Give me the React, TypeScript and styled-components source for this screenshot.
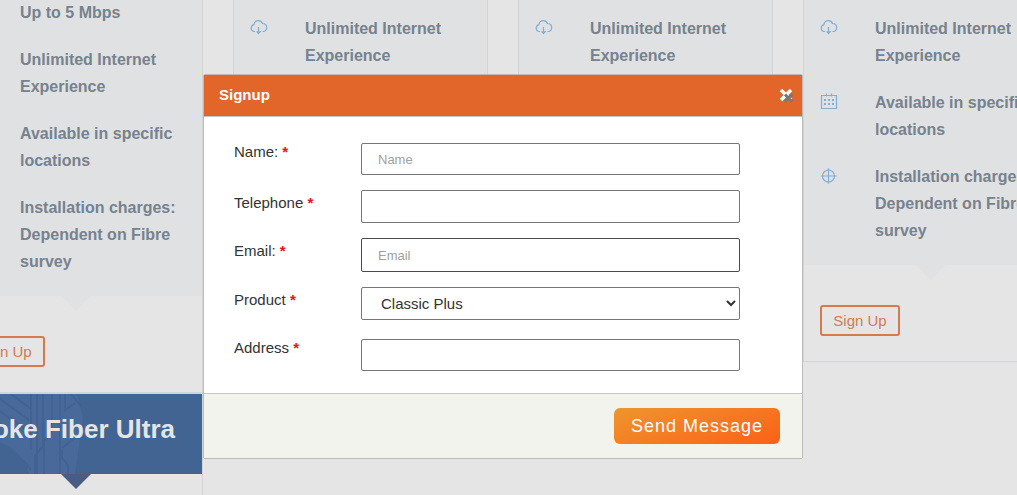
import React from "react";
import styled, { createGlobalStyle, css } from "styled-components";

const GlobalStyle = createGlobalStyle`
  *, *::before, *::after { box-sizing: border-box; }
  body {
    margin: 0;
    background: #e5e5e5;
    font-family: "Liberation Sans", Arial, sans-serif;
    font-size: 15px;
    color: #333;
  }
`;

const Page = styled.main`
  height: 100vh;
  overflow: hidden;
`;

const Plans = styled.section`
  display: grid;
  grid-template-columns: repeat(4, minmax(0, 1fr));
  align-items: start;
  gap: 30px;
  margin: 0 -41px 0 -52px;
`;

const Column = styled.div<{ $raised?: boolean }>`
  display: flex;
  flex-direction: column;
  margin-top: ${(p) => (p.$raised ? "-16px" : "0")};
`;

const Card = styled.article<{ $stacked?: boolean }>`
  border: 1px solid #d2d4d6;
  border-top-width: ${(p) => (p.$stacked ? "1px" : "0")};
`;

const pointer = css`
  &::after {
    content: "";
    position: absolute;
    top: 100%;
    left: 50%;
    margin-left: -15px;
    border: 15px solid transparent;
    border-bottom-width: 0;
  }
`;

const Features = styled.ul`
  position: relative;
  display: flex;
  flex-direction: column;
  gap: 20px;
  margin: 0;
  padding: 15px 16px 21px;
  list-style: none;
  background: #e0e1e3;
  ${pointer}
  &::after { border-top-color: #e0e1e3; }
`;

const Feature = styled.li`
  display: grid;
  grid-template-columns: 55px 1fr;
  font-size: 16px;
  font-weight: bold;
  line-height: 27px;
  color: #76828e;

  svg {
    width: 18px;
    height: 18px;
    margin-top: 3px;
    fill: none;
    stroke: #82aed6;
    stroke-width: 1.2;
  }
`;

const CardAction = styled.div`
  padding: 40px 16px 25px;
`;

const SignUpButton = styled.button`
  width: 80px;
  height: 31px;
  padding: 0;
  border: 2px solid #d67a4c;
  border-radius: 3px;
  background: transparent;
  color: #d67a4c;
  font: 15px "Liberation Sans", Arial, sans-serif;
`;

const PlanTitle = styled.header`
  position: relative;
  display: flex;
  align-items: center;
  justify-content: flex-end;
  height: 80px;
  padding: 0 27px 10px 0;
  background: #426492;
  ${pointer}
  &::after { border-top-color: #4b5c84; }

  h2 {
    position: relative;
    margin: 0;
    font-size: 26px;
    line-height: 30px;
    white-space: nowrap;
    color: #e5e5e5;
  }
`;

const Circuit = styled.svg`
  position: absolute;
  top: 0;
  left: 0;
  width: 140px;
  height: 80px;
`;

const PlanBody = styled.div`
  height: 240px;
`;

const Overlay = styled.div`
  position: fixed;
  inset: 0;
  display: flex;
  align-items: flex-start;
  justify-content: center;
  padding: 74px 11px 0 0;
`;

const Dialog = styled.form`
  width: 600px;
  max-width: 100%;
  border: 1px solid #bbb;
  border-radius: 2px;
  background: #fff;
`;

const DialogHeader = styled.header`
  display: flex;
  align-items: flex-start;
  justify-content: space-between;
  height: 42px;
  padding: 10px 8px 0 15px;
  border-bottom: 1px solid #c3c5c7;
  background: #e26529;

  h1 {
    margin: 0;
    font-size: 15px;
    line-height: 20px;
    color: #fff;
  }
`;

const CloseButton = styled.button`
  display: flex;
  align-items: center;
  height: 20px;
  padding: 0;
  border: 0;
  background: none;
`;

const Fields = styled.div`
  display: flex;
  flex-direction: column;
  gap: 15px;
  padding: 22px 62px 22px 30px;
`;

const Row = styled.div`
  display: grid;
  grid-template-columns: 127px 1fr;
  align-items: start;
`;

const Label = styled.label`
  padding-top: 3px;
  line-height: 20px;
`;

const Star = styled.b`
  color: #f01010;
`;

const control = css`
  width: 100%;
  border: 1px solid #767676;
  border-radius: 2px;
  background: #fff;
  color: #333;
  font-family: "Liberation Sans", Arial, sans-serif;
`;

const sizes = {
  compact: css`height: 32px; margin-top: 4px;`,
  regular: css`height: 33px;`,
  tall: css`height: 34px; border-color: #4a4a4a;`,
};

const Input = styled.input<{ $size: keyof typeof sizes }>`
  ${control}
  padding: 0 16px;
  font-size: 13px;
  ${(p) => sizes[p.$size]}
  &::placeholder { color: #a0a0a0; }
`;

const Select = styled.select`
  ${control}
  height: 33px;
  padding: 0 0 0 15px;
  font-size: 15px;
`;

const DialogFooter = styled.footer`
  display: flex;
  justify-content: flex-end;
  padding: 14px 22px;
  border-top: 1px solid #c5c7c5;
  background: #f2f3ec;
`;

const SendButton = styled.button`
  height: 36px;
  padding: 0 17px;
  border: 0;
  border-radius: 6px;
  background: linear-gradient(160deg, #ee962d, #fc6018);
  color: #fff;
  font: 18px "Liberation Sans", Arial, sans-serif;
  letter-spacing: 1px;
`;

const CloudIcon = () => (
  <svg viewBox="0 0 18 18" aria-hidden="true">
    <path d="M5 13.500H3.800C2.200 13.200 1.200 11.800 1.200 10.100c0-1.800 1.100-3 2.700-3.500C4.300 4.200 6 2.600 8.300 2.600c2 0 3.500 1.100 4.200 2.900 2.600.1 4.200 1.800 4.200 4.100 0 2.100-1.200 3.600-3.100 3.900H12.500M6.500 13.500h1M10 13.500h1M8.500 9v6M6.800 13.500l1.700 2 1.700-2" />
  </svg>
);

const CalendarIcon = () => (
  <svg viewBox="0 0 18 18" aria-hidden="true">
    <path d="M1.500 3.500h15v13h-15zM6.500 1.500v3M11.500 1.500v3" />
    <path d="M4 8h2M8 8h2M12 8h2M4 12h2M8 12h2M12 12h2" strokeWidth="2" />
  </svg>
);

const TargetIcon = () => (
  <svg viewBox="0 0 18 18" aria-hidden="true">
    <circle cx="8.500" cy="10" r="6" />
    <path d="M8.500 2.200v15.600M1 10h15.600" />
  </svg>
);

const CircuitPattern = () => (
  <Circuit viewBox="0 0 140 80" fill="none" aria-hidden="true">
    <path d="M40 0h88l6 24-8 56H80C76 62 60 48 40 46z" fill="#48699a" />
    <g stroke="#3f608f" strokeWidth="2" opacity="0.7">
      <path d="M44 0l36 26M62 0l20 15M44 12l36 26M44 24l26 20M82 0v56M88 0v80M94 0v52l-8 10v18M103 0v36l-8 12v32M111 0v80M116 0v16l10-7M113 54l14-11 6 3M113 56v8l6 7v9M122 0l10 12M74 66l8 10" />
    </g>
  </Circuit>
);

const CommonFeatures = () => (
  <>
    <Feature><CloudIcon /><span>Unlimited Internet Experience</span></Feature>
    <Feature><CalendarIcon /><span>Available in specific locations</span></Feature>
    <Feature><TargetIcon /><span>Installation charges: Dependent on Fibre survey</span></Feature>
  </>
);

const Action = () => (
  <CardAction><SignUpButton type="button">Sign Up</SignUpButton></CardAction>
);

const PlanCard = () => (
  <Card>
    <Features><CommonFeatures /></Features>
    <Action />
  </Card>
);

const Required = () => <Star aria-hidden="true">*</Star>;

export default function App() {
  return (
    <>
      <GlobalStyle />
      <Page>
        <Plans>
          <Column $raised>
            <Card>
              <Features>
                <Feature><i /><span>Up to 5 Mbps</span></Feature>
                <CommonFeatures />
              </Features>
              <Action />
            </Card>
            <Card $stacked>
              <PlanTitle>
                <CircuitPattern />
                <h2>Bespoke Fiber Ultra</h2>
              </PlanTitle>
              <PlanBody />
            </Card>
          </Column>
          <Column><PlanCard /></Column>
          <Column><PlanCard /></Column>
          <Column><PlanCard /></Column>
        </Plans>
      </Page>
      <Overlay>
        <Dialog role="dialog" aria-labelledby="signup-title" onSubmit={(e) => e.preventDefault()}>
          <DialogHeader>
            <h1 id="signup-title">Signup</h1>
            <CloseButton type="button" aria-label="Close">
              <svg width="16" height="16" viewBox="0 0 16 16" fill="none">
                <path d="M3 3l10 10M13 3L3 13" stroke="#fff" strokeWidth="3.500" />
                <path d="M7 7.500l7 7M14 7.500l-7 7" stroke="#777" strokeWidth="3" />
              </svg>
            </CloseButton>
          </DialogHeader>
          <Fields>
            <Row>
              <Label htmlFor="name">Name: <Required /></Label>
              <Input id="name" type="text" placeholder="Name" $size="compact" />
            </Row>
            <Row>
              <Label htmlFor="telephone">Telephone <Required /></Label>
              <Input id="telephone" type="tel" $size="regular" />
            </Row>
            <Row>
              <Label htmlFor="email">Email: <Required /></Label>
              <Input id="email" type="email" placeholder="Email" $size="tall" />
            </Row>
            <Row>
              <Label htmlFor="product">Product <Required /></Label>
              <Select id="product" defaultValue="Classic Plus">
                <option>Classic Plus</option>
              </Select>
            </Row>
            <Row>
              <Label htmlFor="address">Address <Required /></Label>
              <Input id="address" type="text" $size="compact" />
            </Row>
          </Fields>
          <DialogFooter>
            <SendButton type="submit">Send Message</SendButton>
          </DialogFooter>
        </Dialog>
      </Overlay>
    </>
  );
}
